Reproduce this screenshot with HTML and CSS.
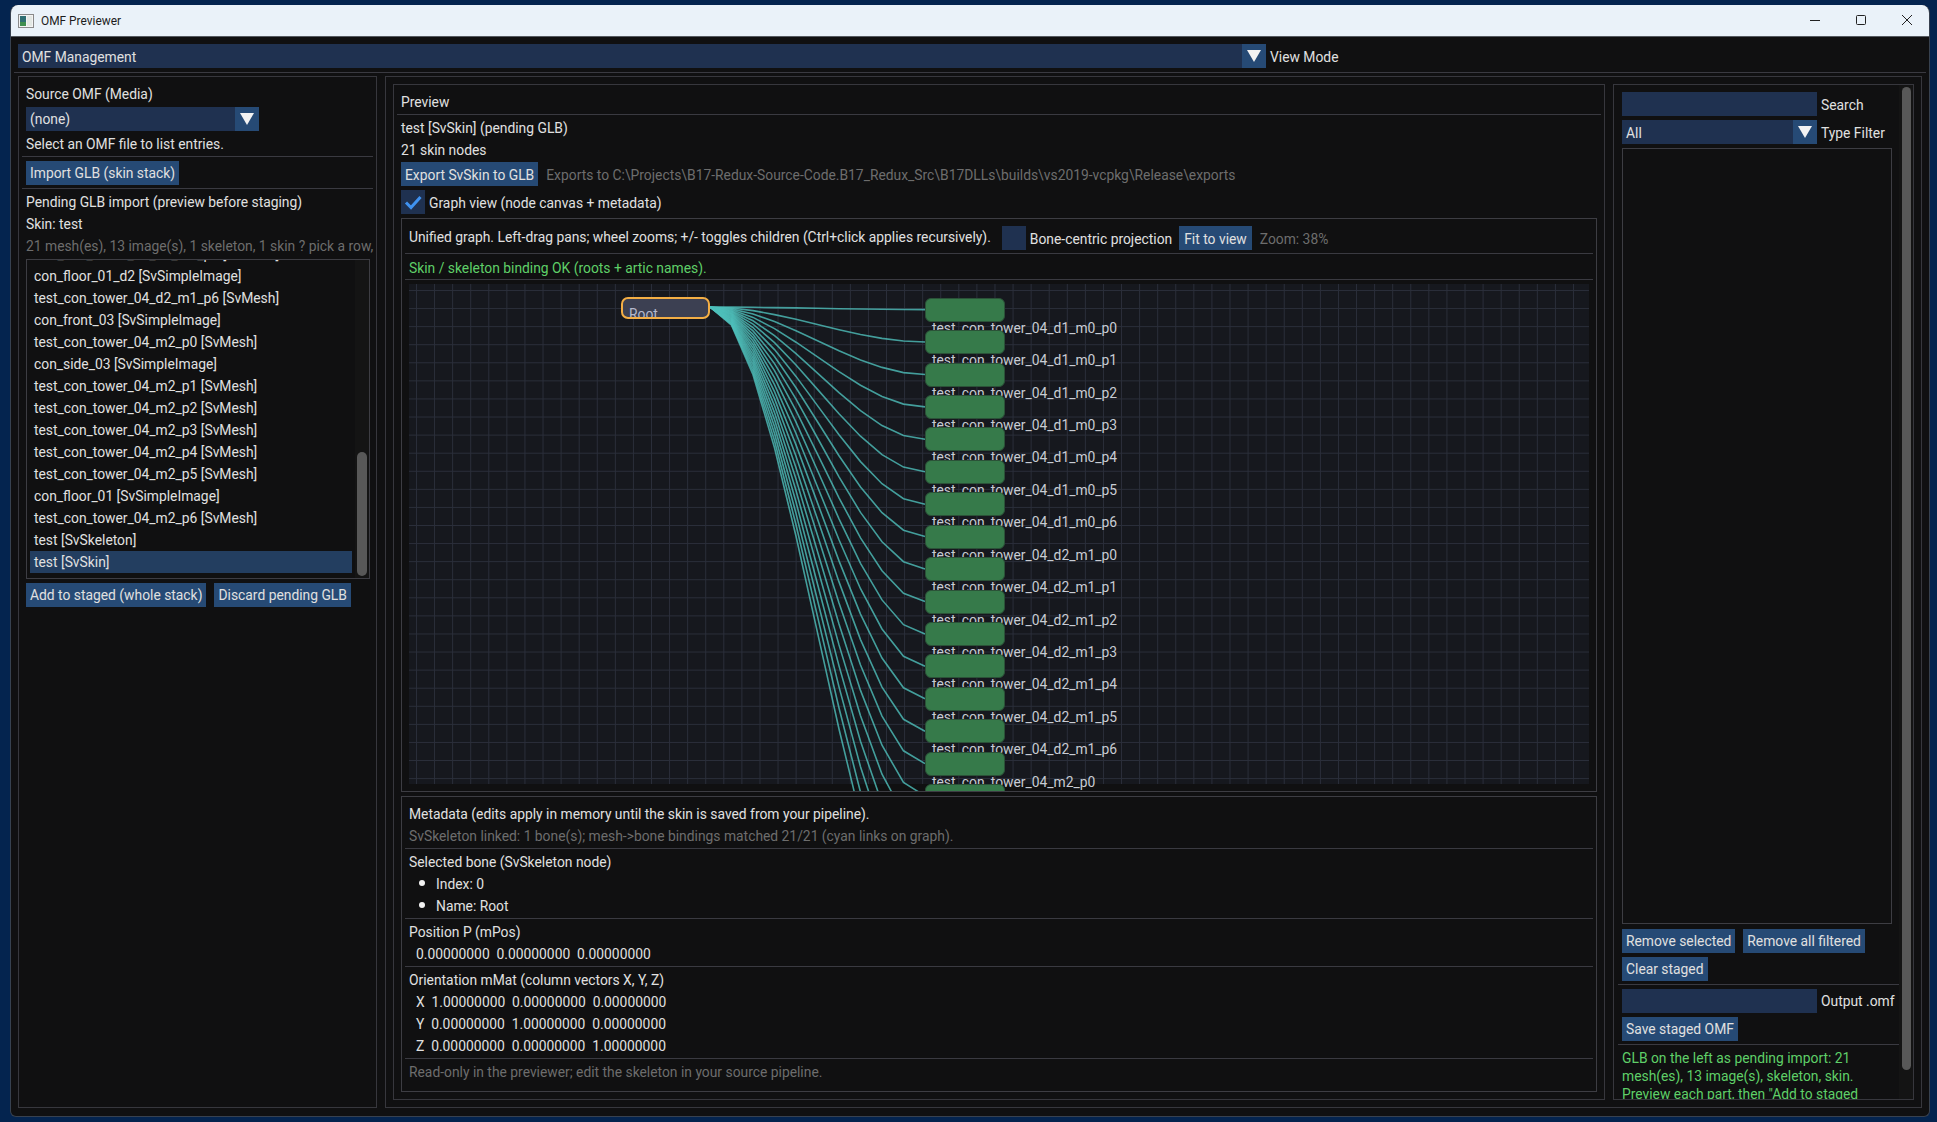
FILE: index.html
```html
<!DOCTYPE html>
<html lang="en">
<head>
  <meta charset="UTF-8" />
  <title>OMF Previewer</title>
  <link rel="stylesheet" href="styles.css">
</head>
<body>
<div class="window">
  <div class="titlebar">
    <svg class="app-icon" width="16" height="14" viewBox="0 0 16 14">
      <rect x="0.5" y="0.5" width="15" height="13" fill="#f4f4f4" stroke="#8a8a8a"/>
      <rect x="2" y="2" width="6" height="10" fill="#2f6f73"/>
      <rect x="2" y="8" width="6" height="4" fill="#3f8f4f"/>
      <rect x="9" y="2" width="5" height="10" fill="#e3e8e4"/>
    </svg>
    <span class="title">OMF Previewer</span>
    <div class="win-controls">
      <svg width="12" height="12" viewBox="0 0 12 12"><path d="M1 6.5H11" stroke="#222" fill="none"/></svg>
      <svg width="12" height="12" viewBox="0 0 12 12"><rect x="1.5" y="1.5" width="9" height="9" rx="1" stroke="#222" fill="none"/></svg>
      <svg width="12" height="12" viewBox="0 0 12 12"><path d="M1 1L11 11M11 1L1 11" stroke="#222" fill="none"/></svg>
    </div>
  </div>

  <div class="client">
    <div class="menu-row">
      <div class="combo combo-menu"><span class="low">OMF Management</span><i class="arrow"></i></div>
      <span class="low">View Mode</span>
    </div>
    <div class="menu-sep"></div>

    <div class="columns">
      <div class="panel left-panel stack">
        <div class="txt">Source OMF (Media)</div>
        <div class="combo combo-source"><span>(none)</span><i class="arrow"></i></div>
        <div class="txt">Select an OMF file to list entries.</div>
        <div class="sep"></div>
        <div><button class="btn">Import GLB (skin stack)</button></div>
        <div class="sep"></div>
        <div class="txt">Pending GLB import (preview before staging)</div>
        <div class="txt">Skin: test</div>
        <div class="txt muted">21 mesh(es), 13 image(s), 1 skeleton, 1 skin ? pick a row,</div>
        <div class="entry-list">
          <div class="entry-rows">
            <div class="entry">test_con_tower_04_d2_m1_p5 [SvMesh]</div>
            <div class="entry">con_floor_01_d2 [SvSimpleImage]</div>
            <div class="entry">test_con_tower_04_d2_m1_p6 [SvMesh]</div>
            <div class="entry">con_front_03 [SvSimpleImage]</div>
            <div class="entry">test_con_tower_04_m2_p0 [SvMesh]</div>
            <div class="entry">con_side_03 [SvSimpleImage]</div>
            <div class="entry">test_con_tower_04_m2_p1 [SvMesh]</div>
            <div class="entry">test_con_tower_04_m2_p2 [SvMesh]</div>
            <div class="entry">test_con_tower_04_m2_p3 [SvMesh]</div>
            <div class="entry">test_con_tower_04_m2_p4 [SvMesh]</div>
            <div class="entry">test_con_tower_04_m2_p5 [SvMesh]</div>
            <div class="entry">con_floor_01 [SvSimpleImage]</div>
            <div class="entry">test_con_tower_04_m2_p6 [SvMesh]</div>
            <div class="entry">test [SvSkeleton]</div>
            <div class="entry selected">test [SvSkin]</div>
          </div>
          <div class="scrollbar list-scroll"><div class="thumb"></div></div>
        </div>
        <div class="row">
          <button class="btn">Add to staged (whole stack)</button>
          <button class="btn">Discard pending GLB</button>
        </div>
      </div>

      <div class="panel main-panel">
        <div class="panel center-panel stack">
          <div class="txt">Preview</div>
          <div class="sep"></div>
          <div class="txt">test [SvSkin] (pending GLB)</div>
          <div class="txt">21 skin nodes</div>
          <div class="row export-row">
            <button class="btn low">Export SvSkin to GLB</button>
            <span class="muted nowrap low">Exports to C:\Projects\B17-Redux-Source-Code.B17_Redux_Src\B17DLLs\builds\vs2019-vcpkg\Release\exports</span>
          </div>
          <div class="check-row">
            <span class="checkbox">
              <svg width="24" height="24" viewBox="0 0 24 24"><path d="M5 12.5L10 17.5L19.5 7" stroke="#3f92f0" stroke-width="3" fill="none"/></svg>
            </span>
            <span class="low">Graph view (node canvas + metadata)</span>
          </div>

          <div class="box graph-box">
            <div class="toolbar">
              <span class="nowrap high">Unified graph. Left-drag pans; wheel zooms; +/- toggles children (Ctrl+click applies recursively).</span>
              <span class="checkbox bone-check"></span>
              <span class="nowrap low">Bone-centric projection</span>
              <button class="btn fit-btn low">Fit to view</button>
              <span class="muted low">Zoom: 38%</span>
            </div>
            <div class="sep"></div>
            <div class="txt ok status-line">Skin / skeleton binding OK (roots + artic names).</div>
            <div class="sep"></div>
            <div class="graph-clip" id="graph">
              <div class="grid"></div>
              <svg class="edges" id="edges" width="1180" height="507"></svg>
              <div class="node root-node"><span>Root</span></div>
            </div>
          </div>

          <div class="box meta-box stack">
            <div class="txt">Metadata (edits apply in memory until the skin is saved from your pipeline).</div>
            <div class="txt muted">SvSkeleton linked: 1 bone(s); mesh-&gt;bone bindings matched 21/21 (cyan links on graph).</div>
            <div class="sep"></div>
            <div class="txt">Selected bone (SvSkeleton node)</div>
            <div class="txt bullet">Index: 0</div>
            <div class="txt bullet">Name: Root</div>
            <div class="sep"></div>
            <div class="txt">Position P (mPos)</div>
            <div class="txt values">0.00000000  0.00000000  0.00000000</div>
            <div class="sep"></div>
            <div class="txt">Orientation mMat (column vectors X, Y, Z)</div>
            <div class="txt values">X  1.00000000  0.00000000  0.00000000</div>
            <div class="txt values">Y  0.00000000  1.00000000  0.00000000</div>
            <div class="txt values">Z  0.00000000  0.00000000  1.00000000</div>
            <div class="sep"></div>
            <div class="txt muted">Read-only in the previewer; edit the skeleton in your source pipeline.</div>
          </div>
        </div>

        <div class="panel right-panel">
          <div class="right-body stack">
            <div class="field-row"><div class="input"></div><span class="low">Search</span></div>
            <div class="field-row"><div class="combo combo-field"><span class="low">All</span><i class="arrow"></i></div><span class="low">Type Filter</span></div>
            <div class="box staged-list"></div>
            <div class="row">
              <button class="btn">Remove selected</button>
              <button class="btn">Remove all filtered</button>
            </div>
            <div><button class="btn">Clear staged</button></div>
            <div class="sep"></div>
            <div class="field-row"><div class="input"></div><span>Output .omf</span></div>
            <div><button class="btn">Save staged OMF</button></div>
            <div class="sep"></div>
            <div class="ok status-text">GLB on the left as pending import: 21 mesh(es), 13 image(s), skeleton, skin. Preview each part, then "Add to staged (whole stack)".</div>
          </div>
          <div class="scrollbar panel-scroll"><div class="thumb"></div></div>
        </div>
      </div>
    </div>
  </div>
</div>
<script src="script.js"></script>
</body>
</html>
```

FILE: styles.css
```css
* { box-sizing: border-box; }
html, body { margin: 0; height: 100%; overflow: hidden; }
body { padding: 5px 7px 5px 10px; background: #04244f; font-family: Roboto, "Liberation Sans", sans-serif; font-size: 13.85px; color: #e0e0e0; }

.window { width: 1920px; height: 1112px; background: #101011; border: 1px solid #37414f; border-top: none; border-radius: 8px 8px 6px 6px; overflow: hidden; }
.titlebar { height: 32px; margin: 0 -1px; background: #eaf2f9; border-bottom: 1px solid #555a60; display: flex; align-items: center; padding-left: 8px; color: #1c1c1c; }
.app-icon { margin-right: 7px; }
.title { font-size: 11.9px; }
.win-controls { margin: -2px 0 0 auto; display: flex; gap: 34px; padding-right: 17px; }

.client { padding: 7px 7px 0; }
.menu-row { display: flex; align-items: center; gap: 4px; height: 24px; }
.menu-sep { height: 1px; margin: 4px -4px 3px; background: #3a3a41; }
.columns { display: flex; gap: 8px; height: 1032px; }

.panel { border: 1px solid #37373d; }
.box { border: 1px solid #3d3d43; }
.stack { display: flex; flex-direction: column; gap: 4px; }
.row { display: flex; gap: 8px; align-items: center; }
.txt { height: 18px; line-height: 18px; white-space: nowrap; }
.nowrap { white-space: nowrap; }
.muted { color: #6d6d6d; }
.ok { color: #5fcf68; }
.low { padding-top: 2px; }
.high { padding-bottom: 2px; }
.sep { height: 1px; flex: none; margin: -1px -4px 0; background: #3a3a41; }

.btn { height: 24px; padding: 0 4px; border: none; background: #264a75; color: #e0e0e0; font: inherit; white-space: nowrap; }
.btn.low { padding-top: 2px; }
.input { width: 195px; height: 24px; background: #1f3150; }
.combo { display: flex; align-items: center; justify-content: space-between; height: 24px; padding-left: 4px; background: #1f3150; }
.combo-menu { width: 1248px; }
.combo-source { width: 233px; }
.combo-field { width: 195px; }
.arrow { width: 24px; height: 24px; background: #264a75; position: relative; flex: none; }
.arrow::after { content: ""; position: absolute; left: 5px; top: 6px; border-left: 7px solid transparent; border-right: 7px solid transparent; border-top: 12px solid #f2f2f2; }

.left-panel { width: 360px; padding: 8px 7px; overflow: hidden; }
.entry-list { display: flex; width: 344px; height: 320px; border: 1px solid #3d3d43; overflow: hidden; }
.entry-rows { flex: 1; display: flex; flex-direction: column; justify-content: flex-end; padding: 0 3px 5px; overflow: hidden; min-width: 0; }
.entry { height: 22px; line-height: 22px; padding-left: 4px; flex: none; white-space: nowrap; }
.entry.selected { background: #233e60; }
.scrollbar { flex: none; background: #141414; }
.thumb { background: #585858; border-radius: 5px; }
.list-scroll { width: 14px; padding: 192px 2px 0 2px; }
.list-scroll .thumb { height: 124px; }

.main-panel { flex: 1; display: flex; gap: 8px; padding: 7px; }
.center-panel { width: 1212px; padding: 8px 7px 0; }
.export-row { margin-top: -1px; }
.check-row { display: flex; align-items: center; gap: 4px; }
.checkbox { display: block; width: 24px; height: 24px; background: #1f3150; flex: none; }
.checkbox svg { display: block; }

.graph-box { width: 1196px; height: 574px; display: flex; flex-direction: column; gap: 4px; padding: 7px 7px 0; flex: none; }
.toolbar { display: flex; align-items: center; gap: 4px; height: 24px; flex: none; }
.bone-check { margin-left: 7px; }
.fit-btn { margin-left: 3px; margin-right: 4px; padding: 0 5px; }
.fit-btn.low { padding: 2px 5px 0; }
.status-line { line-height: 20px; }
.graph-clip { position: relative; height: 507px; overflow: hidden; flex: none; }
.grid { height: 500px; background-color: #16181e; background-image: linear-gradient(#2a2e3a 1px, transparent 1px), linear-gradient(90deg, #2a2e3a 1px, transparent 1px); background-size: 18.09px 18.09px; background-position: 7px 6px; }
.edges { position: absolute; left: 0; top: 0; }
.edges polyline { fill: none; stroke: #4fc0bc; stroke-width: 1.6; stroke-opacity: 0.8; }

.node { position: absolute; }
.root-node { left: 212px; top: 12.5px; width: 89px; height: 22px; background: #3c4052; border: 2px solid #f3ae45; border-radius: 7px; overflow: hidden; padding-left: 6px; color: #b4b8cc; line-height: 31px; }
.mesh-node { width: 80px; height: 24px; background: #367a4a; border: 1px solid #2b5238; border-radius: 6px; }
.node-label { position: absolute; left: 523px; height: 18px; line-height: 18px; white-space: nowrap; color: #c8ccd4; }

.meta-box { width: 1196px; height: 296px; padding: 8px 7px 0; flex: none; }
.bullet { position: relative; padding-left: 27px; }
.bullet::before { content: ""; position: absolute; left: 10px; top: 5px; width: 6px; height: 6px; border-radius: 50%; background: #f2f2f2; }
.values { padding-left: 7px; white-space: pre; }

.right-panel { flex: 1; display: flex; justify-content: space-between; overflow: hidden; }
.right-body { width: 285px; padding: 7px 0 0 8px; }
.field-row { display: flex; align-items: center; gap: 4px; height: 24px; flex: none; }
.staged-list { width: 270px; height: 776px; margin-bottom: 1px; flex: none; }
.status-text { width: 272px; line-height: 18px; }
.panel-scroll { width: 14px; padding: 2px 2px 0 3px; }
.panel-scroll .thumb { height: 983px; width: 9px; }
```

FILE: script.js
```js
// root -> mesh links and the mesh nodes of the skin graph
const graph = document.getElementById('graph');
const edges = document.getElementById('edges');

const names = [];
['d1_m0', 'd2_m1', 'm2'].forEach(group => {
  for (let p = 0; p < 7; p++) names.push(`test_con_tower_04_${group}_p${p}`);
});

const startX = 301, startY = 23, endX = 516, step = 32.43, firstTop = 13.6;

names.forEach((name, i) => {
  const top = firstTop + step * i;
  const endY = top + 12;
  const points = [];
  for (let k = 0; k <= 10; k++) {
    const t = k / 10;
    const ease = 3 * t * t - 2 * t * t * t;
    points.push(`${(startX + (endX - startX) * t).toFixed(1)},${(startY + (endY - startY) * ease).toFixed(1)}`);
  }
  const line = document.createElementNS('http://www.w3.org/2000/svg', 'polyline');
  line.setAttribute('points', points.join(' '));
  edges.appendChild(line);

  const node = document.createElement('div');
  node.className = 'node mesh-node';
  node.style.left = endX + 'px';
  node.style.top = top.toFixed(1) + 'px';
  graph.appendChild(node);

  const label = document.createElement('div');
  label.className = 'node-label';
  label.style.top = (top + 21).toFixed(1) + 'px';
  label.textContent = name;
  graph.appendChild(label);
});
```
